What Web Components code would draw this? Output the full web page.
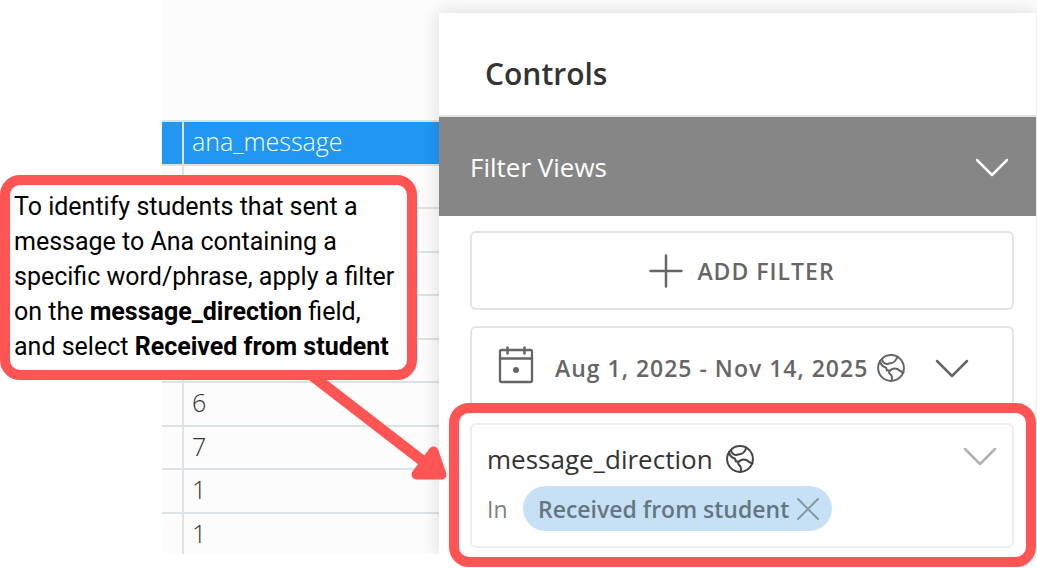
<!DOCTYPE html>
<html lang="en">
<head>
<meta charset="utf-8">
<title>Filter controls guide</title>
<style>
  body { margin: 0; background: #fff; font-family: "Open Sans", "Noto Sans", sans-serif; color: #333; }
</style>
</head>
<body>
<guide-page></guide-page>

<template id="guide-page">
  <style>
    :host { display: grid; grid-template-columns: 162px 277px minmax(0, 1fr); position: relative; overflow: hidden; }
    .backdrop { grid-area: 1 / 2 / 2 / 4; background: #fcfcfc; margin-bottom: 13px; }
    data-sheet { grid-area: 1 / 2; }
    controls-panel { grid-area: 1 / 3; }
    call-out { position: absolute; left: 0; top: 175px; z-index: 2; }
    .arrow { position: absolute; left: 300px; top: 370px; z-index: 1; }
  </style>
  <div class="backdrop"></div>
  <data-sheet></data-sheet>
  <controls-panel></controls-panel>
  <svg class="arrow" width="150" height="114" viewBox="300 370 150 114" aria-hidden="true">
    <path d="M310 374 L424 462" stroke="#ff5454" stroke-width="11"/>
    <path d="M433.500 451.500 L441.500 474.500 H416.500 Z" fill="#ff5454" stroke="#ff5454" stroke-width="10" stroke-linejoin="round"/>
  </svg>
  <call-out>To identify students that sent a message to Ana containing a specific word/phrase, apply a filter on the <b>message_direction</b> field, and&nbsp;select <b>Received from student</b></call-out>
</template>

<template id="data-sheet">
  <style>
    :host { display: block; height: 434px; padding-top: 120px; overflow: hidden; }
    table { width: 100%; border-collapse: collapse; table-layout: fixed; }
    tr { height: 44px; }
    tbody tr:nth-child(odd) { height: 43px; }
    th, td { padding: 0 8px 4px; border-top: 2px solid #dde2e7; text-align: left; font-size: 25px; font-weight: 300; line-height: 34px; }
    tr > :first-child { width: 20px; padding: 0; border-right: 2px solid #dde2e7; }
    th { background: #2196f3; color: #fff; }
  </style>
  <table>
    <thead><tr><th></th><th scope="col">ana_message</th></tr></thead>
    <tbody>
      <tr><td></td><td></td></tr>
      <tr><td></td><td></td></tr>
      <tr><td></td><td></td></tr>
      <tr><td></td><td></td></tr>
      <tr><td></td><td></td></tr>
      <tr><td></td><td>6</td></tr>
      <tr><td></td><td>7</td></tr>
      <tr><td></td><td>1</td></tr>
      <tr><td></td><td>1</td></tr>
    </tbody>
  </table>
</template>

<template id="call-out">
  <style>
    :host { display: block; box-sizing: border-box; width: 417px; padding: 4px 4px 6px; border: 10px solid #ff5454; border-radius: 20px; background: #fff; color: #000; font: 25px/35px Roboto, sans-serif; }
  </style>
  <slot></slot>
</template>

<template id="controls-panel">
  <style>
    :host { display: flex; flex-direction: column; position: relative; margin: 13px 1px 0 0; }
    .shade { position: absolute; inset: 0 0 13px; background: #fff; box-shadow: 0 0 18px rgba(0, 0, 0, .14); clip-path: inset(-13px -1px 0 -20px); }
    header, .views, .body { position: relative; }
    header { padding: 20px 46px 0; border-bottom: 2px solid #e4e4e4; }
    h1 { margin: 0; font-size: 30px; font-weight: 600; line-height: 82px; }
    .views { display: flex; align-items: center; justify-content: space-between; width: 100%; height: 99px; padding: 0 27px 0 31px; border: 0; background: #868686; color: #fff; font: 400 26px/36px "Open Sans", sans-serif; text-align: left; }
    .body { padding: 15px 0 0; }
    .card { display: flex; align-items: center; box-sizing: border-box; margin: 0 22px 16px 31px; border: 2px solid #e4e4e4; border-radius: 6px; background: #fff; color: #666; font: 600 23px/32px "Open Sans", sans-serif; letter-spacing: 1px; width: calc(100% - 53px); }
    .add { justify-content: center; gap: 14px; height: 79px; padding: 0; font-weight: 550; }
    .date { height: 77px; margin-bottom: 0; padding: 5px 43px 0 26px; border-bottom: 0; border-radius: 6px 6px 0 0; font-weight: 550; }
    .date span { margin: 0 9px 0 21px; white-space: nowrap; }
    .date ui-icon:last-child { margin-left: auto; }
    filter-card { margin-left: 10px; }
  </style>
  <div class="shade"></div>
  <header><h1>Controls</h1></header>
  <button class="views">Filter Views <ui-icon name="chevron"></ui-icon></button>
  <div class="body">
    <button class="card add"><ui-icon name="plus"></ui-icon>ADD FILTER</button>
    <button class="card date"><ui-icon name="calendar"></ui-icon><span>Aug 1, 2025 - Nov 14, 2025</span><ui-icon name="globe"></ui-icon><ui-icon name="chevron"></ui-icon></button>
    <filter-card>
      <span slot="field">message_direction</span>
      <span slot="operator">In</span>
      <span slot="value">Received from student</span>
    </filter-card>
  </div>
</template>

<template id="filter-card">
  <style>
    :host { display: block; padding: 10px 12px 9px 11px; border: 10px solid #ff5454; border-radius: 20px; background: #fff; }
    section { box-sizing: border-box; height: 125px; border: 2px solid #eee; border-radius: 6px; padding: 14px 15px 0 15px; }
    .row { display: flex; align-items: center; }
    h2 { margin: 0 13px 0 0; font-size: 26px; font-weight: 400; line-height: 40px; }
    button { display: flex; padding: 0; border: 0; background: none; color: inherit; }
    .open { margin: 0 0 6px auto; color: #b3b3b3; }
    .op { width: 36px; font-size: 23px; color: #808080; }
    .globe { color: #444; }
    .values { margin-top: 7px; }
    .chip { display: flex; align-items: center; gap: 8px; height: 45px; padding: 0 13px 0 15px; border-radius: 23px; background: #c6e1f5; color: #667681; font-size: 23px; font-weight: 550; }
    .chip button { color: #82939f; }
  </style>
  <section>
    <div class="row"><h2><slot name="field"></slot></h2><ui-icon class="globe" name="globe"></ui-icon><button class="open" aria-label="Expand filter"><ui-icon name="chevron"></ui-icon></button></div>
    <div class="row values"><span class="op"><slot name="operator"></slot></span><span class="chip"><slot name="value"></slot><button aria-label="Remove value"><ui-icon name="close"></ui-icon></button></span></div>
  </section>
</template>

<script>
  const stamp = (host, id) => host.attachShadow({ mode: 'open' })
    .append(document.getElementById(id).content.cloneNode(true));

  const icons = {
    chevron: [34, 20, '<path d="M2 3 L17 18 L32 3" stroke-width="2.500"/>'],
    plus: [34, 34, '<path d="M17 1.500 V32.500 M1.500 17 H32.500" stroke-width="2.500"/>'],
    close: [22, 22, '<path d="M1 1 L21 21 M21 1 L1 21" stroke-width="1.800"/>'],
    calendar: [36, 46, '<rect x="2" y="5" width="32" height="32" rx="1.500" stroke-width="2.300"/><path d="M2 13.500 H34 M9.500 2.500 V8.500 M26.500 2.500 V8.500" stroke-width="2.500"/><circle cx="18" cy="25" r="3" fill="currentColor" stroke="none"/>'],
    globe: [28, 28, '<circle cx="14" cy="14" r="12.900"/><path d="M3 7 C3.500 9.500 5 12 7.500 13 C9.500 13.500 9.800 14.500 9.800 16.500 L13 16.500 C15 14.500 18 14 20.500 15 C22.500 17 24.500 18 26.500 18.500 M5 5.500 C6 8.500 8 10.500 11 9.800 C13.500 8.800 16 9.500 17.500 7.500 C18.500 6 20 5.500 20 2.800 M13 16.500 C11.500 18 12 19.500 13.500 20.500 C15.500 21.500 15 24 14.800 26.500"/>']
  };

  class UiIcon extends HTMLElement {
    constructor() {
      super();
      this.attachShadow({ mode: 'open' });
    }
    connectedCallback() {
      const [w, h, art] = icons[this.getAttribute('name')];
      this.shadowRoot.innerHTML = `<style>:host { display: inline-flex; flex: none; }</style>
        <svg width="${w}" height="${h}" viewBox="0 0 ${w} ${h}" fill="none" stroke="currentColor" stroke-width="2" stroke-linecap="round" stroke-linejoin="round" aria-hidden="true">${art}</svg>`;
    }
  }
  customElements.define('ui-icon', UiIcon);

  for (const id of ['data-sheet', 'call-out', 'filter-card', 'controls-panel', 'guide-page']) {
    customElements.define(id, class extends HTMLElement {
      constructor() {
        super();
        stamp(this, id);
      }
    });
  }
</script>
</body>
</html>
